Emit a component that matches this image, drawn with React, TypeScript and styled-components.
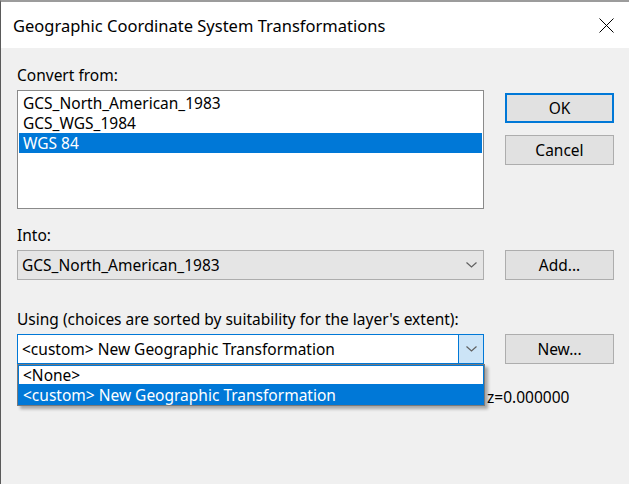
import styled, { createGlobalStyle } from 'styled-components';

const GlobalStyle = createGlobalStyle`
  html, body {
    margin: 0;
    padding: 0;
    height: 100%;
    overflow: hidden;
  }
  #root {
    height: 100%;
  }
`;

const Window = styled.div`
  height: 100%;
  display: flex;
  flex-direction: column;
  box-sizing: border-box;
  border-left: 1px solid #5a5a5a;
  border-top: 2px solid #9c9c9c;
  background: #f0f0f0;
  font-family: "Noto Sans", "Open Sans", sans-serif;
  font-size: 15.5px;
  color: #000;
`;

const TitleBar = styled.div`
  height: 46px;
  flex-shrink: 0;
  display: flex;
  align-items: center;
  justify-content: space-between;
  padding: 0 15px 0 12px;
  background: #fff;
`;

const Title = styled.span`
  font-size: 16.5px;
  color: #000;
`;

const CloseButton = styled.div`
  width: 16px;
  height: 16px;
  display: flex;
  align-items: center;
  justify-content: center;
`;

const Body = styled.div`
  position: relative;
  flex: 1;
  padding: 17px 14px 0 16px;
`;

const Label = styled.div`
  height: 20px;
  line-height: 20px;
  margin-bottom: 5px;
`;

const Row = styled.div<{ $gap?: number }>`
  display: grid;
  grid-template-columns: 467px 109px;
  column-gap: 21px;
  align-items: start;
  margin-bottom: ${p => p.$gap ?? 0}px;
`;

const ListBox = styled.div`
  height: 119px;
  box-sizing: border-box;
  border: 1px solid #8a8a8a;
  background: #fff;
  padding: 2px 1px;
`;

const ListItem = styled.div<{ $selected?: boolean }>`
  height: 20px;
  line-height: 20px;
  padding-left: 4px;
  background: ${p => (p.$selected ? '#0078d7' : 'transparent')};
  color: ${p => (p.$selected ? '#fff' : '#000')};
`;

const ButtonColumn = styled.div`
  display: flex;
  flex-direction: column;
  gap: 12px;
  padding-top: 3px;
`;

const Button = styled.div<{ $default?: boolean }>`
  height: 30px;
  box-sizing: border-box;
  display: flex;
  align-items: center;
  justify-content: center;
  background: #e1e1e1;
  border: ${p => (p.$default ? '2px solid #0078d7' : '1px solid #adadad')};
`;

const Combo = styled.div<{ $open?: boolean }>`
  height: 30px;
  box-sizing: border-box;
  display: flex;
  align-items: stretch;
  border: 1px solid ${p => (p.$open ? '#0078d7' : '#adadad')};
  background: ${p => (p.$open ? '#fff' : '#e5e5e5')};
`;

const ComboText = styled.div`
  flex: 1;
  display: flex;
  align-items: center;
  padding-left: 4px;
`;

const ComboArrow = styled.div<{ $open?: boolean }>`
  width: 24px;
  display: flex;
  align-items: center;
  justify-content: center;
  background: ${p => (p.$open ? '#cce4f7' : 'transparent')};
  border-left: 1px solid ${p => (p.$open ? '#0078d7' : 'transparent')};
`;

const InfoLine = styled.div`
  display: flex;
  height: 20px;
  line-height: 20px;
  margin-top: 23px;
  white-space: nowrap;
`;

// the start of the parameter line sits under the open drop list
const InfoClip = styled.span`
  width: 470px;
  overflow: hidden;
  direction: rtl;
  text-align: left;
`;

const DropList = styled.div`
  position: absolute;
  left: 16px;
  top: 316px;
  width: 468px;
  box-sizing: border-box;
  border: 1px solid #7a7a7a;
  background: #fff;
  box-shadow: 3px 3px 3px rgba(0, 0, 0, 0.3);
`;

const DropItem = styled.div<{ $selected?: boolean; $focused?: boolean }>`
  height: 20px;
  line-height: 18px;
  box-sizing: border-box;
  padding-left: 4px;
  border: 1px solid ${p => (p.$focused ? '#0078d7' : 'transparent')};
  background: ${p => (p.$selected ? '#0078d7' : '#fff')};
  color: ${p => (p.$selected ? '#fff' : '#000')};
`;

const Chevron = () => (
  <svg width="11" height="6" viewBox="0 0 11 6">
    <polyline points="0.5,0.5 5.5,5 10.5,0.5" fill="none" stroke="#606060" strokeWidth="1.2" />
  </svg>
);

const CloseIcon = () => (
  <svg width="15" height="15" viewBox="0 0 15 15">
    <line x1="0.5" y1="0.5" x2="14.5" y2="14.5" stroke="#000" strokeWidth="1" />
    <line x1="14.5" y1="0.5" x2="0.5" y2="14.5" stroke="#000" strokeWidth="1" />
  </svg>
);

const sources = ['GCS_North_American_1983', 'GCS_WGS_1984', 'WGS 84'];

const App = () => {
  return (
    <>
      <GlobalStyle />
      <Window>
        <TitleBar>
          <Title>Geographic Coordinate System Transformations</Title>
          <CloseButton><CloseIcon /></CloseButton>
        </TitleBar>
        <Body>
          <Label>Convert from:</Label>
          <Row $gap={16}>
            <ListBox>
              {sources.map((s, i) => (
                <ListItem key={s} $selected={i === 2}>{s}</ListItem>
              ))}
            </ListBox>
            <ButtonColumn>
              <Button $default>OK</Button>
              <Button>Cancel</Button>
            </ButtonColumn>
          </Row>

          <Label>Into:</Label>
          <Row $gap={29}>
            <Combo>
              <ComboText>GCS_North_American_1983</ComboText>
              <ComboArrow><Chevron /></ComboArrow>
            </Combo>
            <Button>Add...</Button>
          </Row>

          <Label>Using (choices are sorted by suitability for the layer's extent):</Label>
          <Row>
            <Combo $open>
              <ComboText>&lt;custom&gt; New Geographic Transformation</ComboText>
              <ComboArrow $open><Chevron /></ComboArrow>
            </Combo>
            <Button>New...</Button>
          </Row>

          <InfoLine>
            <InfoClip>Method: Helmert dx=0.000000 d</InfoClip>
            <span>z=0.000000</span>
          </InfoLine>

          <DropList>
            <DropItem $focused>&lt;None&gt;</DropItem>
            <DropItem $selected>&lt;custom&gt; New Geographic Transformation</DropItem>
          </DropList>
        </Body>
      </Window>
    </>
  );
};

export default App;
